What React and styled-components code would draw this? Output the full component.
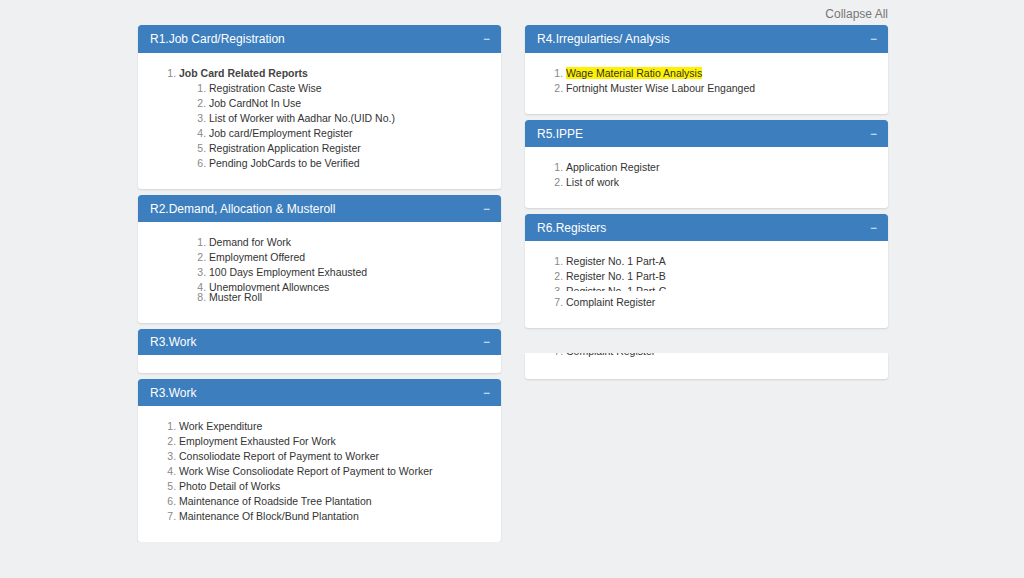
import React from "react";
import styled, { createGlobalStyle } from "styled-components";

const GlobalStyle = createGlobalStyle`
    body {
        margin: 0;
        background: #eff0f2;
        font-family: "Liberation Sans", Arial, sans-serif;
    }
`;

const Page = styled.div`
    width: 750px;
    padding-left: 2px;
    margin: 0 auto;
`;

const Toolbar = styled.div`
    display: flex;
    justify-content: flex-end;
    padding-top: 6px;
    margin-bottom: 3px;
`;

const CollapseLink = styled.span`
    font-size: 12px;
    line-height: 16px;
    color: #777;
    cursor: pointer;
`;

const Columns = styled.div`
    display: grid;
    grid-template-columns: 363px 363px;
    column-gap: 24px;
    align-items: start;
`;

const Column = styled.div`
    display: flex;
    flex-direction: column;
    gap: 6px;
`;

const Panel = styled.div`
    background: #fff;
    border-radius: 3px;
    box-shadow: 0 1px 2px rgba(0, 0, 0, 0.12);
    overflow: hidden;
`;

// leftover of a panel that is still sliding shut
const Ghost = styled(Panel)`
    height: 26px;
    margin-top: 19px;
    border-top-left-radius: 0;
    border-top-right-radius: 0;
`;

const Heading = styled.div`
    display: flex;
    justify-content: space-between;
    align-items: center;
    height: ${(p) => p.h || 28}px;
    padding: 0 11px 0 12px;
    background: #3d7ebe;
    color: #fff;
    font-size: 12px;
    border-radius: 3px 3px 0 0;
`;

const Toggle = styled.span`
    font-size: 12px;
    opacity: 0.9;
`;

const Body = styled.div`
    padding: ${(p) => (p.empty ? "9px 11px" : "12.5px 11px 11px")};
`;

const GhostBody = styled.div`
    margin-top: -9px;
    padding: 0 11px;
`;

const List = styled.ol`
    margin: 0 0 ${(p) => (p.last ? 7.5 : 0)}px;
    padding-left: ${(p) => p.indent || 30}px;
    font-size: 10.5px;
    line-height: 15px;
    color: #333;
    li::marker {
        color: #888;
    }
    ol {
        margin: 0;
        padding-left: 30px;
    }
`;

const Bold = styled.b`
    font-weight: bold;
    color: #444;
`;

const Clip = styled.div`
    height: ${(p) => p.h}px;
    overflow: hidden;
    margin-bottom: ${(p) => p.after || 0}px;
`;

const Mark = styled.span`
    background: #fff200;
`;

const PanelBox = ({ title, h, children, empty }) => (
    <Panel>
        <Heading h={h}>
            <span>{title}</span>
            <Toggle>&minus;</Toggle>
        </Heading>
        <Body empty={empty}>{children}</Body>
    </Panel>
);

const jobCard = [
    "Registration Caste Wise",
    "Job CardNot In Use",
    "List of Worker with Aadhar No.(UID No.)",
    "Job card/Employment Register",
    "Registration Application Register",
    "Pending JobCards to be Verified",
];

const works = [
    "Work Expenditure",
    "Employment Exhausted For Work",
    "Consoliodate Report of Payment to Worker",
    "Work Wise Consoliodate Report of Payment to Worker",
    "Photo Detail of Works",
    "Maintenance of Roadside Tree Plantation",
    "Maintenance Of Block/Bund Plantation",
];

export default function App() {
    return (
        <>
            <GlobalStyle />
            <Page>
                <Toolbar>
                    <CollapseLink>Collapse All</CollapseLink>
                </Toolbar>
                <Columns>
                    <Column>
                        <PanelBox title="R1.Job Card/Registration">
                            <List last>
                                <li>
                                    <Bold>Job Card Related Reports</Bold>
                                    <ol>
                                        {jobCard.map((t) => (
                                            <li key={t}>{t}</li>
                                        ))}
                                    </ol>
                                </li>
                            </List>
                        </PanelBox>
                        <PanelBox title="R2.Demand, Allocation &amp; Musteroll" h={27}>
                            <List indent={60}>
                                <li>Demand for Work</li>
                                <li>Employment Offered</li>
                                <li>100 Days Employment Exhausted</li>
                            </List>
                            <Clip h={11} after={-1}>
                                <List indent={60} start={4}>
                                    <li>Unemployment Allownces</li>
                                    <li>Work Demand Register</li>
                                </List>
                            </Clip>
                            <List indent={60} start={8} last>
                                <li>Muster Roll</li>
                            </List>
                        </PanelBox>
                        <PanelBox title="R3.Work" h={26} empty />
                        <PanelBox title="R3.Work" h={27}>
                            <List last>
                                {works.map((t) => (
                                    <li key={t}>{t}</li>
                                ))}
                            </List>
                        </PanelBox>
                    </Column>
                    <Column>
                        <PanelBox title="R4.Irregularties/ Analysis">
                            <List last>
                                <li>
                                    <Mark>Wage Material Ratio Analysis</Mark>
                                </li>
                                <li>Fortnight Muster Wise Labour Enganged</li>
                            </List>
                        </PanelBox>
                        <PanelBox title="R5.IPPE" h={27}>
                            <List last>
                                <li>Application Register</li>
                                <li>List of work</li>
                            </List>
                        </PanelBox>
                        <PanelBox title="R6.Registers" h={27}>
                            <List>
                                <li>Register No. 1 Part-A</li>
                                <li>Register No. 1 Part-B</li>
                            </List>
                            <Clip h={7} after={4}>
                                <List start={3}>
                                    <li>Register No. 1 Part-C</li>
                                    <li>Register No. 2</li>
                                </List>
                            </Clip>
                            <List start={7} last>
                                <li>Complaint Register</li>
                            </List>
                        </PanelBox>
                        <Ghost>
                            <GhostBody>
                                <List start={7}>
                                    <li>Complaint Register</li>
                                </List>
                            </GhostBody>
                        </Ghost>
                    </Column>
                </Columns>
            </Page>
        </>
    );
}
